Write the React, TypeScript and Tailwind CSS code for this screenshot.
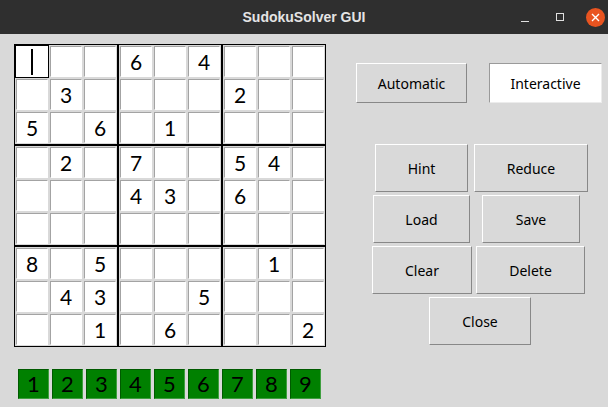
const GRID: number[][] = [
  [0, 0, 0, 6, 0, 4, 0, 0, 0],
  [0, 3, 0, 0, 0, 0, 2, 0, 0],
  [5, 0, 6, 0, 1, 0, 0, 0, 0],
  [0, 2, 0, 7, 0, 0, 5, 4, 0],
  [0, 0, 0, 4, 3, 0, 6, 0, 0],
  [0, 0, 0, 0, 0, 0, 0, 0, 0],
  [8, 0, 5, 0, 0, 0, 0, 1, 0],
  [0, 4, 3, 0, 0, 5, 0, 0, 0],
  [0, 0, 1, 0, 6, 0, 0, 0, 2],
];

const DIGIT_FONT = { fontFamily: "Lato, 'Noto Sans', sans-serif" };
const UI_FONT = { fontFamily: "'Noto Sans', 'Open Sans', sans-serif" };

function Cell({ value, focused }: { value: number; focused?: boolean }) {
  return (
    <div className={`h-[33px] w-[34px] p-[1px] ${focused ? "bg-black" : "bg-[#d9d9d9]"}`}>
      <div
        className={`flex h-full w-full items-center justify-center bg-white text-[21px] leading-none text-black ${
          focused ? "" : "border border-b-white border-l-[#a3a3a3] border-r-white border-t-[#a3a3a3]"
        }`}
        style={DIGIT_FONT}
      >
        {focused ? <span className="block h-[26px] w-[2px] bg-black" /> : value ? value : ""}
      </div>
    </div>
  );
}

function Block({ br, bc }: { br: number; bc: number }) {
  const cells = [];
  for (let r = 0; r < 3; r++) {
    for (let c = 0; c < 3; c++) {
      const row = br * 3 + r;
      const col = bc * 3 + c;
      cells.push(<Cell key={`${r}-${c}`} value={GRID[row][col]} focused={row === 0 && col === 0} />);
    }
  }
  return <div className="grid grid-cols-3">{cells}</div>;
}

function TkButton({
  label,
  w,
  h = 48,
  active,
}: {
  label: string;
  w: number;
  h?: number;
  active?: boolean;
}) {
  return (
    <div
      className={`flex shrink-0 items-center justify-center border text-[14px] text-black ${
        active
          ? "border-b-[#ececec] border-l-[#9a9a9a] border-r-[#ececec] border-t-[#9a9a9a] bg-white"
          : "border-b-[#888888] border-l-white border-r-[#888888] border-t-white bg-[#d9d9d9]"
      }`}
      style={{ ...UI_FONT, width: w, height: h }}
    >
      {label}
    </div>
  );
}

export default function App() {
  return (
    <div className="flex h-[407px] w-[608px] flex-col overflow-hidden bg-[#d9d9d9]">
      {/* title bar */}
      <div className="relative flex h-[34px] shrink-0 items-center justify-center bg-[#2f2f2f]">
        <span
          className="text-[14px] font-bold text-[#e4e4e4]"
          style={{ fontFamily: "'Liberation Sans', Arial, sans-serif" }}
        >
          SudokuSolver GUI
        </span>
        <div className="absolute right-[3px] top-0 flex h-full items-center">
          <span className="mr-[27px] mt-[8px] block h-[1px] w-[8px] bg-[#e0e0e0]" />
          <span className="mr-[22px] block h-[8px] w-[8px] border border-[#e0e0e0]" />
          <span className="flex h-[19px] w-[19px] items-center justify-center rounded-full bg-[#e95420]">
            <svg width="9" height="9" viewBox="0 0 9 9">
              <path d="M1 1 L8 8 M8 1 L1 8" stroke="white" strokeWidth="1.4" />
            </svg>
          </span>
        </div>
      </div>

      <div className="flex">
        {/* left: board + digit palette */}
        <div className="flex flex-col pl-[14px] pt-[10px]">
          <div className="grid w-[312px] grid-cols-3 gap-[2px] border border-black bg-black">
            {[0, 1, 2].map((br) =>
              [0, 1, 2].map((bc) => <Block key={`${br}-${bc}`} br={br} bc={bc} />),
            )}
          </div>
          <div className="mt-[22px] flex gap-[3px] pl-[4px]">
            {[1, 2, 3, 4, 5, 6, 7, 8, 9].map((n) => (
              <div
                key={n}
                className="flex h-[30px] w-[31px] items-center justify-center border border-b-[#3f9f3f] border-l-[#005a00] border-r-[#3f9f3f] border-t-[#005a00] bg-[#008000] text-[22px] leading-none text-black"
                style={DIGIT_FONT}
              >
                {n}
              </div>
            ))}
          </div>
        </div>

        {/* right: controls */}
        <div className="ml-[30px] flex flex-col pt-[29px]">
          <div className="flex gap-[22px]">
            <TkButton label="Automatic" w={111} h={40} />
            <TkButton label="Interactive" w={113} h={40} active />
          </div>
          <div className="mt-[41px] flex flex-col gap-[3px]">
            <div className="flex gap-[6px] pl-[19px]">
              <TkButton label="Hint" w={93} />
              <TkButton label="Reduce" w={114} />
            </div>
            <div className="flex gap-[12px] pl-[17px]">
              <TkButton label="Load" w={97} />
              <TkButton label="Save" w={98} />
            </div>
            <div className="flex gap-[4px] pl-[16px]">
              <TkButton label="Clear" w={100} />
              <TkButton label="Delete" w={109} />
            </div>
            <div className="flex pl-[73px]">
              <TkButton label="Close" w={102} />
            </div>
          </div>
        </div>
      </div>
    </div>
  );
}
